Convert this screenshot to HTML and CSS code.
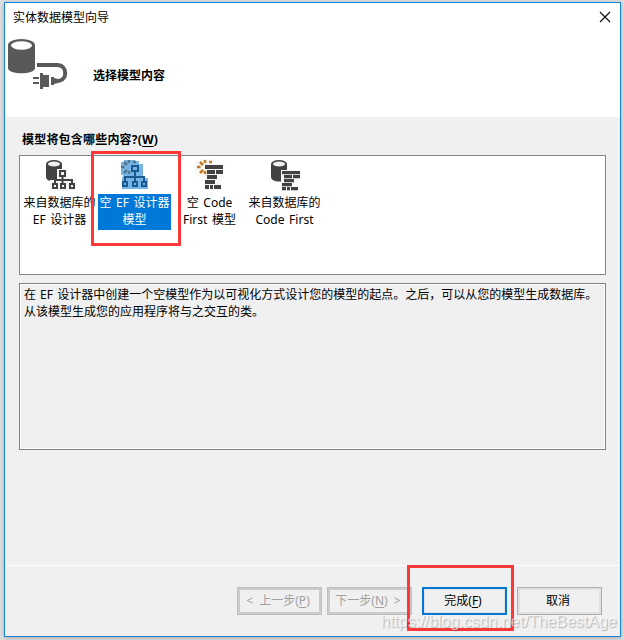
FILE: index.html
```html
<!DOCTYPE html>
<html lang="zh-CN">
<head>
<meta charset="utf-8">
<title>实体数据模型向导</title>
<link rel="stylesheet" href="styles.css">
</head>
<body>
<svg class="defs" width="0" height="0">
  <defs>
    <g id="database">
      <path d="M2 5v13c0 6 16 6 16 0V5z" fill="#424242"/>
      <ellipse cx="10" cy="5" rx="8" ry="4" fill="#424242"/>
      <ellipse cx="10" cy="5" rx="6" ry="2.500" fill="#f0f0f0"/>
    </g>
    <g id="rays" fill="none" stroke-width="2.500">
      <path d="M9 1v3M13 3h3M4 3l3 3M1 8h3.500M4 14l3-3M9 12v3"/>
    </g>
    <path id="code" d="M0 0h18v4H0zM2 5h8v4H2zM11 5h7v4h-7zM2 10h10v4H2zM0 15h10v4H0zM0 20h4v4H0zM5 20h3v4H5zM9 20h7v4H9z"/>
  </defs>
</svg>
<main class="window">
  <header class="header">
    <div class="titlebar">
      <span>实体数据模型向导</span>
      <svg class="close" width="10" height="10" viewBox="0 0 10 10"><path d="M0 0l10 10M10 0L0 10" stroke="#111" stroke-width="1.2"/></svg>
    </div>
    <div class="hero">
      <svg width="62" height="52" viewBox="0 0 62 52">
        <path d="M1 7v23c0 7 27 7 27 0V7z" fill="#58595b"/>
        <ellipse cx="14.500" cy="7" rx="13.500" ry="6" fill="#58595b"/>
        <ellipse cx="14.500" cy="7.500" rx="10.500" ry="4.200" fill="#fff"/>
        <path d="M30 27h20c11 0 11 16 0 16h-1" fill="none" stroke="#58595b" stroke-width="4"/>
        <path d="M26 39h6v2h-6zM26 44h6v2h-6zM33 35h3v2h6v12h-6v2h-3zM44 39h3v1l4 1v4l-4 1v1h-3z" fill="#58595b"/>
      </svg>
      <h1>选择模型内容</h1>
    </div>
  </header>
  <section class="body">
    <h2>模型将包含哪些内容?(<u>W</u>)</h2>
    <div class="options">
      <div class="option">
        <svg class="icon" width="32" height="32" viewBox="0 0 32 32">
          <use href="#database"/>
          <path d="M13 10h11v10h8v12H6V21h7z" fill="#f5f5f5"/>
          <path d="M16 12h5v5h-5zM9 25h4v4H9zM17 25h4v4h-4zM26 25h4v4h-4zM18.500 18v6M11 24v-3h17v3" fill="none" stroke="#424242" stroke-width="2"/>
        </svg>
        <span>来自数据库的<br>EF 设计器</span>
      </div>
      <div class="option selected">
        <svg class="icon" width="32" height="32" viewBox="0 0 32 32">
          <path d="M5 1h11v1h4v3h4v14h5v11H3V18h1v-2H2V3h3z" fill="#76b4e6"/>
          <use href="#rays" stroke="#52788f" x="1"/>
          <path d="M13 7h6v5h-6zM4 23h4v4H4zM14 23h4v4h-4zM23 23h4v4h-4zM16 13v9M6 22v-4h19v4" fill="none" stroke="#195b93" stroke-width="2"/>
        </svg>
        <span>空 EF 设计器<br>模型</span>
        <i class="mark"></i>
      </div>
      <div class="option">
        <svg class="icon" width="32" height="32" viewBox="0 0 32 32">
          <path d="M5 0h12l3 5h10v14h-3v12H10V18H5l-4-4V4z" fill="#f7f7f7"/>
          <use href="#rays" stroke="#c17a1d" x="2"/>
          <use href="#code" x="11" y="6" fill="#424242"/>
        </svg>
        <span>空 Code<br>First 模型</span>
      </div>
      <div class="option">
        <svg class="icon" width="32" height="32" viewBox="0 0 32 32">
          <use href="#database"/>
          <path d="M12 11h20v11h-3v10H12z" fill="#f7f7f7"/>
          <g transform="translate(13 12) scale(1 .8)"><use href="#code" fill="#424242"/></g>
        </svg>
        <span>来自数据库的<br>Code First</span>
      </div>
    </div>
    <p class="description">在 EF 设计器中创建一个空模型作为以可视化方式设计您的模型的起点。之后，可以从您的模型生成数据库。<br>从该模型生成您的应用程序将与之交互的类。</p>
  </section>
  <footer class="footer">
    <button disabled>&lt; 上一步(<u>P</u>)</button>
    <button disabled>下一步(<u>N</u>) &gt;</button>
    <div class="finish"><button class="primary">完成(<u>F</u>)</button><i class="mark"></i></div>
    <button>取消</button>
  </footer>
</main>
<div class="watermark">https://blog.csdn.net/TheBestAge</div>
</body>
</html>
```
FILE: styles.css
```css
* { box-sizing: border-box; }
body {
  margin: 0;
  width: 624px;
  height: 640px;
  padding: 2px 3px 3px 4px;
  overflow: hidden;
  position: relative;
  background: #dedede;
  color: #000;
  font: 12px/17px "Noto Sans", "Noto Sans CJK SC", sans-serif;
}
.defs { position: absolute; }
.window {
  width: 617px;
  height: 635px;
  display: flex;
  flex-direction: column;
  background: #f0f0f0;
  border: 1px solid #1883d7;
  box-shadow: 0 1px 4px #aaa;
}
.header { height: 114px; background: #fff; }
.titlebar {
  height: 29px;
  padding: 0 10px 0 8px;
  display: flex;
  align-items: center;
  justify-content: space-between;
}
.close { overflow: visible; margin-bottom: 2px; }
.hero { display: flex; padding: 6px 0 0 2px; }
h1, h2 { margin: 0; font-size: 12px; line-height: 17px; font-weight: 700; }
h1 { margin: 29px 0 0 24px; }
.body { height: 448px; padding: 14px 14px 0; }
h2 { height: 24px; padding-left: 3px; letter-spacing: .2px; }
u { text-underline-offset: 2px; text-decoration-thickness: 1px; }
.options {
  height: 120px;
  border: 1px solid #828790;
  background: #fff;
  display: flex;
  padding: 3px 0 0 3px;
  word-spacing: 1.5px;
}
.option {
  position: relative;
  width: 75px;
  padding-right: 1px;
  display: flex;
  flex-direction: column;
  align-items: center;
  text-align: center;
  white-space: nowrap;
}
.icon { height: 32px; margin-bottom: 3px; }
.option span { height: 36px; margin-right: 1px; }
.selected span { width: 73px; background: #0078d7; color: #fff; }
.mark { position: absolute; border: 3px solid #fc3838; z-index: 2; }
.selected .mark { left: -7px; top: -8px; width: 90px; height: 95px; }
.description {
  height: 167px;
  margin: 8px 0 0;
  padding: 2px 3px 0 4px;
  border: 1px solid #828282;
  box-shadow: inset 1px 1px #fff, inset -1px -1px #fff;
  white-space: nowrap;
  word-spacing: 1px;
}
.footer {
  flex: 1;
  border-top: 1px solid #fff;
  display: flex;
  padding: 21px 18px 0 0;
  justify-content: flex-end;
}
button {
  width: 85px;
  height: 28px;
  padding: 0 3px 1px 0;
  border: 1px solid #adadad;
  box-shadow: inset 0 0 0 2px #e1e1e1;
  background: #f0f0f0;
  color: #000;
  font: inherit;
  white-space: nowrap;
}
button:disabled {
  margin-right: 5px;
  border-color: #bfbfbf;
  box-shadow: inset 0 0 0 2px #ccc;
  color: #a0a0a0;
  word-spacing: 3px;
}
.finish { position: relative; margin: 0 10px 0 5px; height: 28px; }
.primary { display: block; border: 2px solid #0078d7; box-shadow: inset 0 0 0 1px #e1e1e1; }
.finish .mark { left: -15px; top: -22px; width: 107px; height: 66px; }
.watermark {
  position: absolute;
  z-index: 3;
  left: 381px;
  top: 612px;
  font: 16px/20px "Liberation Sans", sans-serif;
  color: rgba(255,255,255,.65);
  text-shadow: 1px 1px 1px rgba(0,0,0,.25);
}
```
